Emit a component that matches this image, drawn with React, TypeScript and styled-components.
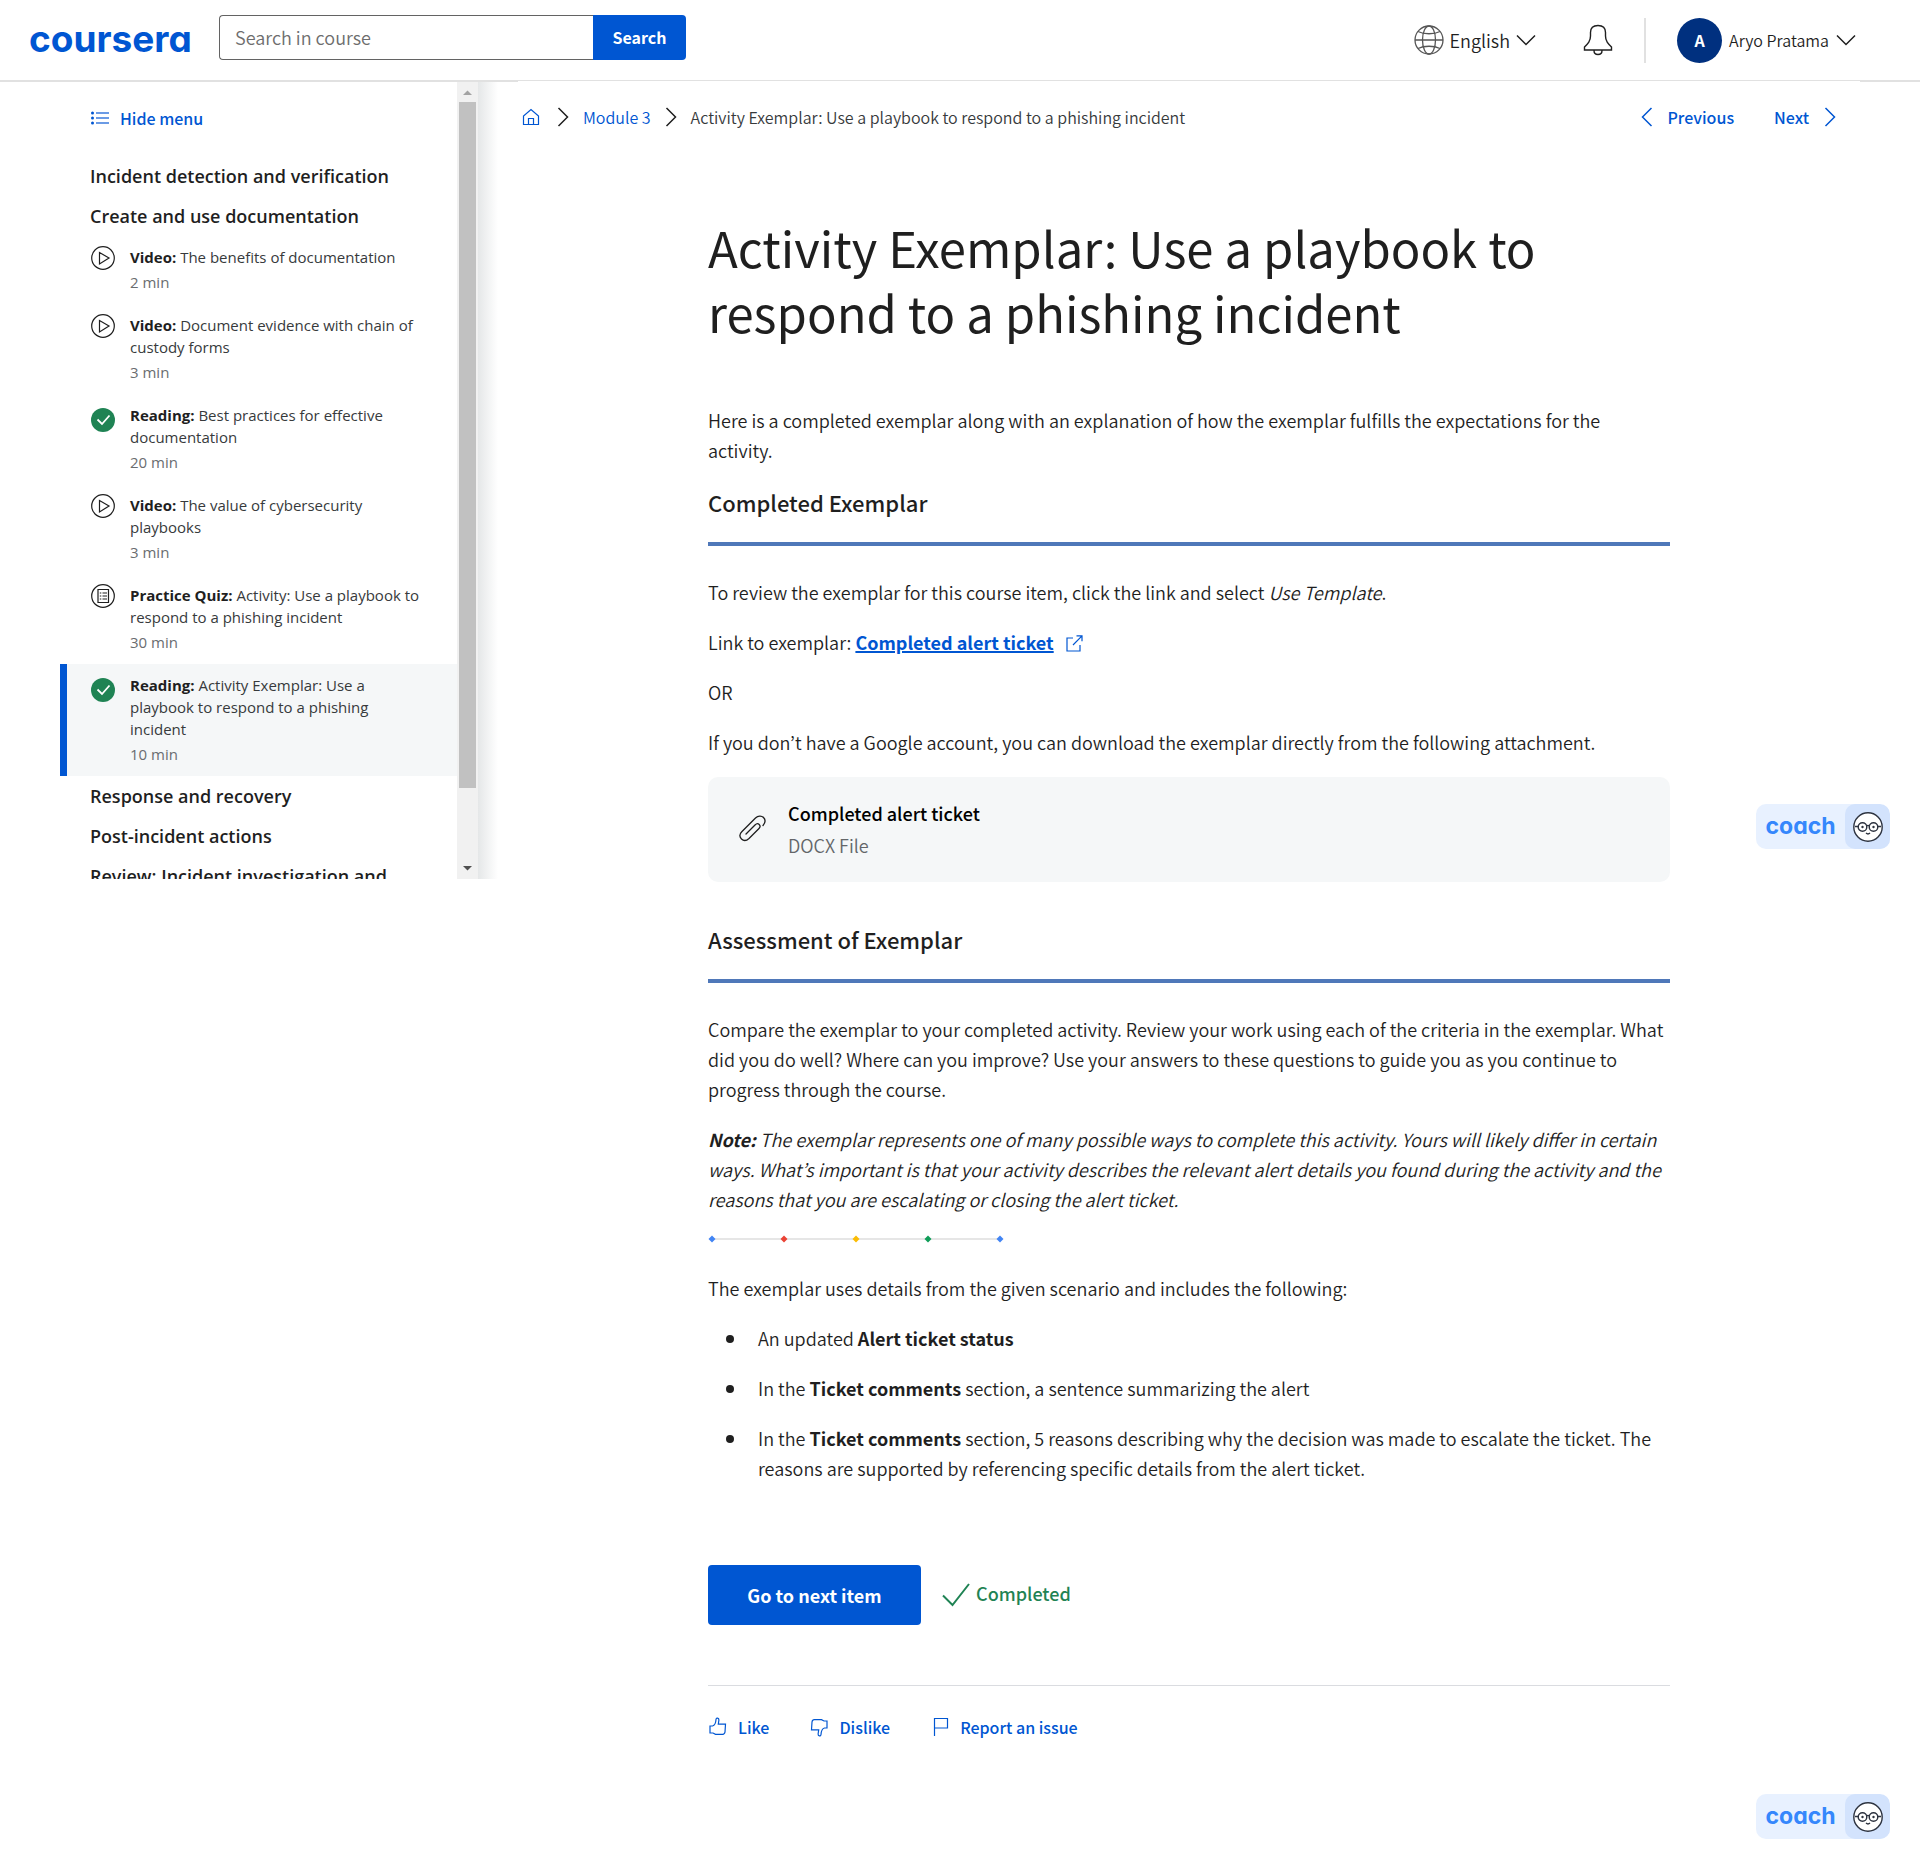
import React from 'react';
import styled, { createGlobalStyle, css } from 'styled-components';

const sans = `'Noto Sans CJK KR', 'Noto Sans', sans-serif`;
const menuSans = `'Open Sans', 'Noto Sans', sans-serif`;
const blue = '#0056d2';
const ink = '#1f1f1f';
const green = '#1f8354';

const GlobalStyle = createGlobalStyle`
  *, *::before, *::after { box-sizing: border-box; }
  body { margin: 0; background: #fff; color: ${ink}; font-family: ${sans}; font-size: 18px; font-weight: 350; line-height: 30px; }
  strong { font-weight: 700; }
  button, input { font-family: inherit; font-weight: inherit; }
  button { border: 0; background: none; padding: 0; cursor: pointer; color: inherit; }
  svg { display: block; flex: none; }
  a { color: ${blue}; text-decoration: none; }
`;

const Page = styled.div`
  position: relative;
  min-height: 100vh;
`;

/* Header */

const Header = styled.header`
  display: flex;
  align-items: center;
  justify-content: space-between;
  height: 82px;
  padding: 0 64px 0 29px;
  border-bottom: 2px solid #e1e1e1;
`;

const HeaderGroup = styled.div`
  display: flex;
  align-items: center;
`;

const Logo = styled.a`
  width: 190px;
  padding-bottom: 2px;
  font: 700 37px/44px Inter, sans-serif;
  font-feature-settings: 'cv11';
`;

const SearchForm = styled.form`
  display: flex;
  height: 45px;
  margin-bottom: 6px;
`;

const SearchInput = styled.input`
  width: 374px;
  padding: 0 15px;
  border: 1px solid #636363;
  border-right: 0;
  border-radius: 4px 0 0 4px;
  font-size: 18px;
  color: ${ink};
  &::placeholder { color: #6d6d6d; opacity: 1; }
`;

const SearchButton = styled.button`
  width: 93px;
  border-radius: 0 4px 4px 0;
  background: ${blue};
  color: #fff;
  font-size: 16px;
  font-weight: 700;
  line-height: 24px;
`;

const HeaderButton = styled.button<{ $small?: boolean }>`
  display: flex;
  align-items: center;
  gap: ${p => (p.$small ? 7 : 6)}px;
  font-size: ${p => (p.$small ? 16 : 18)}px;
  line-height: 30px;
`;

const Bell = styled(HeaderButton)`
  margin: 0 31px 0 47px;
`;

const Divider = styled.span`
  width: 2px;
  height: 45px;
  margin-right: 31px;
  background: #e1e1e1;
`;

const Avatar = styled.span`
  display: grid;
  place-items: center;
  width: 45px;
  height: 45px;
  border-radius: 50%;
  background: #00307f;
  color: #fff;
  font-size: 16px;
  font-weight: 700;
`;

/* Layout */

const Body = styled.div`
  display: grid;
  grid-template-columns: 518px minmax(0, 1fr);
`;

/* Course menu */

const Aside = styled.aside`
  display: flex;
  align-self: start;
  height: 797px;
  overflow: hidden;
  font-family: ${menuSans};
  font-weight: 400;
`;

const MenuScroll = styled.nav`
  width: 457px;
  padding-left: 60px;
  overflow: hidden;
`;

const HideMenu = styled.button`
  display: flex;
  align-items: center;
  gap: 11px;
  margin: 28px 0 30px 31px;
  color: ${blue};
  font: 500 16px/16px ${sans};
`;

const MenuHeading = styled.h2`
  margin: 0;
  padding: 8px 30px;
  font-size: 18px;
  font-weight: 600;
  line-height: 24px;
`;

const ItemList = styled.ul`
  margin: 0;
  padding: 0;
  list-style: none;
`;

const ItemLink = styled.a<{ $active?: boolean }>`
  display: flex;
  gap: 15px;
  padding: 10px 31px 11px 24px;
  border-left: 7px solid transparent;
  color: #373a3c;
  font-size: 15px;
  line-height: 22px;
  ${p => p.$active && css`
    border-left-color: ${blue};
    background: #f5f7f8;
  `}
`;

const ItemIcon = styled.span<{ $done?: boolean }>`
  padding-top: ${p => (p.$done ? 4 : 0)}px;
`;

const ItemKind = styled.strong`
  color: ${ink};
`;

const Minutes = styled.div`
  padding-top: 3px;
  color: #6a6d70;
`;

const Scrollbar = styled.div`
  display: flex;
  flex-direction: column;
  align-items: center;
  width: 21px;
  background: #f1f1f1;
`;

const ScrollThumb = styled.div`
  width: 17px;
  height: 686px;
  margin-bottom: auto;
  background: #c1c1c1;
`;

const ScrollShade = styled.div`
  width: 20px;
  background: linear-gradient(to right, #e5e7e8, #fff);
`;

/* Main column */

const Main = styled.main`
  margin: -1px 60px 0 0;
  background: #fff;
`;

const TopBar = styled.div`
  display: flex;
  justify-content: space-between;
  padding: 22px 24px 0 4px;
  font-size: 16px;
  line-height: 28px;
`;

const Crumbs = styled.nav`
  display: flex;
  align-items: center;
  gap: 14px;
  color: #373a3c;
`;

const HomeLink = styled.a`
  padding-right: 3px;
`;

const Pager = styled.nav`
  display: flex;
  gap: 40px;
`;

const PagerLink = styled.a`
  display: flex;
  align-items: center;
  gap: 15px;
  font-weight: 500;
`;

const Article = styled.article`
  margin: 0 190px;
`;

const Title = styled.h1`
  margin: 83px 0 61px;
  font-size: 49px;
  font-weight: 400;
  line-height: 65px;
`;

const SectionTitle = styled.h2`
  margin: 0;
  padding: 2px 0 25px;
  font-size: 22px;
  font-weight: 500;
  line-height: 30px;
`;

const Rule = styled.hr`
  height: 4px;
  margin: 0 0 31px;
  border: 0;
  background: #4f78b9;
`;

const Text = styled.p`
  margin: 0 0 20px;
  padding-right: 4px;
`;

const StrongLink = styled.a`
  font-weight: 700;
  text-decoration: underline;
  text-decoration-thickness: 2px;
`;

const OutIcon = styled.span`
  display: inline-block;
  margin-left: 12px;
  vertical-align: -2px;
`;

const FileCard = styled.a`
  display: flex;
  align-items: center;
  gap: 22px;
  height: 105px;
  margin-bottom: 40px;
  padding: 0 31px 2px;
  border-radius: 10px;
  background: #f5f7f8;
`;

const FileName = styled.div`
  color: #000;
  font-weight: 500;
  line-height: 32px;
`;

const FileType = styled.div`
  color: #636669;
  line-height: 32px;
`;

const Separator = styled.div`
  padding: 1px 0 30px;
`;

const Bullets = styled.ul`
  margin: 0;
  padding: 0 0 0 40px;
`;

const Bullet = styled.li`
  margin-bottom: 20px;
  padding-left: 10px;
  &::marker { font-size: 20px; }
`;

const Actions = styled.div`
  display: flex;
  align-items: center;
  gap: 20px;
  padding: 62px 0 60px;
  border-bottom: 1px solid #dadce0;
`;

const NextButton = styled.button`
  width: 213px;
  height: 60px;
  border-radius: 4px;
  background: ${blue};
  color: #fff;
  font-size: 18px;
  font-weight: 700;
`;

const Completed = styled.span`
  display: flex;
  align-items: center;
  gap: 6px;
  color: ${green};
  font-weight: 500;
`;

const CompletedText = styled.span`
  padding-bottom: 4px;
`;

const Feedback = styled.div`
  display: flex;
  gap: 40px;
  padding: 26px 0 100px;
`;

const FeedbackButton = styled.button`
  display: flex;
  align-items: center;
  gap: 10px;
  color: ${blue};
  font-size: 16px;
  font-weight: 500;
  line-height: 30px;
`;

/* Coach widget, floating over the page */

const CoachBadge = styled.button<{ $low?: boolean }>`
  position: absolute;
  right: 30px;
  ${p => (p.$low ? 'bottom: 31px;' : 'top: 804px;')}
  display: flex;
  width: 134px;
  height: 45px;
  border-radius: 10px;
  background: #e8f1ff;
  overflow: hidden;
`;

const CoachName = styled.span`
  flex: 1;
  color: #3587fc;
  font: 700 23px/45px Inter, sans-serif;
  font-feature-settings: 'cv11';
`;

const CoachFace = styled.span`
  display: grid;
  place-items: center;
  width: 45px;
  height: 45px;
  border-radius: 10px 10px 0 10px;
  background: #d3e3fd;
`;

/* Icons */

const line = (color: string, width = 1) => ({
  fill: 'none',
  stroke: color,
  strokeWidth: width,
});

const Chevron = ({ dir, color = ink }: { dir: 'down' | 'left' | 'right'; color?: string }) => {
  if (dir === 'down') {
    return (
      <svg width="20" height="12" viewBox="0 0 20 12" aria-hidden="true" {...line(color, 1.5)}>
        <path d="M1 1.5 10 10.5 19 1.5" />
      </svg>
    );
  }
  return (
    <svg width="12" height="20" viewBox="0 0 12 20" aria-hidden="true" {...line(color, 1.5)}>
      <path d={dir === 'left' ? 'M10.5 1 1.5 10l9 9' : 'M1.5 1l9 9-9 9'} />
    </svg>
  );
};

const Globe = () => (
  <svg width="30" height="30" viewBox="0 0 30 30" aria-hidden="true" {...line('#555', 1.3)}>
    <circle cx="15" cy="15" r="14" />
    <ellipse cx="15" cy="15" rx="6.5" ry="14" />
    <path d="M1 15h28M4 6.5c6 3 16 3 22 0M4 23.5c6-3 16-3 22 0" />
  </svg>
);

const BellIcon = () => (
  <svg width="30" height="32" viewBox="0 0 30 32" aria-hidden="true" {...line(ink, 1.4)}>
    <path d="M1.5 26v-3C5 19.5 7.5 17 7.5 12V8.5C7.5 4 10.5 1.5 15 1.5S22.5 4 22.5 8.5V12c0 5 2.5 7.5 6 11v3zM11 26.5c0 2.5 1.7 4 4 4s4-1.5 4-4" />
  </svg>
);

const ListIcon = () => (
  <svg width="18" height="14" viewBox="0 0 18 14" aria-hidden="true" fill={blue}>
    <circle cx="1.5" cy="2" r="1.5" />
    <circle cx="1.5" cy="7" r="1.5" />
    <circle cx="1.5" cy="12" r="1.5" />
    <path d="M5 2h13M5 7h13M5 12h13" stroke="#3b7bdd" strokeWidth="1.5" />
  </svg>
);

const PlayIcon = () => (
  <svg width="24" height="24" viewBox="0 0 24 24" aria-hidden="true" {...line(ink, 1.2)}>
    <circle cx="12" cy="12" r="11.3" />
    <path d="M8.5 6.5v11.5L18 12z" />
  </svg>
);

const QuizIcon = () => (
  <svg width="24" height="24" viewBox="0 0 24 24" aria-hidden="true" {...line(ink, 1.2)}>
    <circle cx="12" cy="12" r="11.3" />
    <path d="M7 5.5h10.5v13H7z" />
    <path d="M8.8 9h1.5M8.8 12h1.5M8.8 15h1.5M11.5 9h4.500M11.5 12h4.500M11.5 15h4.500" />
  </svg>
);

const DoneIcon = () => (
  <svg width="24" height="24" viewBox="0 0 24 24" aria-hidden="true">
    <circle cx="12" cy="12" r="12" fill={green} />
    <path d="M6.5 11.5l4.5 4.5 7.5-8.5" {...line('#fff', 1.8)} />
  </svg>
);

const HomeIcon = () => (
  <svg width="18" height="18" viewBox="0 0 18 18" aria-hidden="true" {...line(blue, 1.2)}>
    <path d="M1.5 16.5V8L9 1.5 16.5 8v8.5zM6.5 16.5V10.5h5v6" />
  </svg>
);

const LaunchIcon = () => (
  <svg width="17" height="17" viewBox="0 0 17 17" aria-hidden="true" {...line(blue, 1.2)}>
    <path d="M7 3H1v13h13V10M10.5 .8H16v5.5M16 .8 7 10" />
  </svg>
);

const ClipIcon = () => (
  <svg width="27" height="27" viewBox="0 0 27 27" aria-hidden="true" {...line(ink, 1.3)} strokeLinecap="round">
    <path d="M24 10.5C26.5 7.5 26.5 4.5 24.5 2.5S19 .7 16.5 3L3 16.5C.5 19 .5 22 2.5 24S7.5 25.8 10 23.5L20 13.5C21.5 12 21.2 10.5 20.2 9.5S17.5 8.5 16 10L7 19" />
  </svg>
);

const CheckIcon = () => (
  <svg width="29" height="24" viewBox="-1 0 29 24" aria-hidden="true" {...line(green, 2)}>
    <path d="M1 12.500l9.500 9.500L27 1" />
  </svg>
);

const thumbPath =
  'M2 9h2.5C6.5 8.5 7.8 5.5 8 2.5 8.3.3 11 .8 10.9 3L10.3 7.2H17.5L17 15c-.2 1.3-1 2.3-2.3 2.3H7.5L5 16H2z';

const LikeIcon = () => (
  <svg width="20" height="20" viewBox="0 0 20 20" aria-hidden="true" {...line(blue, 1.2)}>
    <path d={thumbPath} />
  </svg>
);

const DislikeIcon = () => (
  <svg width="20" height="20" viewBox="0 0 20 20" aria-hidden="true" {...line(blue, 1.2)}>
    <g transform="rotate(180 10 10)">
      <path d={thumbPath} />
    </g>
  </svg>
);

const FlagIcon = () => (
  <svg width="20" height="20" viewBox="-2 0 20 20" aria-hidden="true" {...line(blue, 1.2)}>
    <path d="M2.5 19V1.5h13v9.5h-13" />
  </svg>
);

const Timeline = () => (
  <svg width="298" height="8" viewBox="0 0 298 8" aria-hidden="true">
    <path d="M4 4h290" stroke="#dedede" strokeWidth="1.5" />
    {['#4285f4', '#ea4335', '#fbbc04', '#0f9d58', '#4285f4'].map((c, i) => (
      <path key={i} d={`M${4 + i * 72} .5l3.5 3.5-3.5 3.5-3.5-3.5z`} fill={c} />
    ))}
  </svg>
);

const FaceIcon = () => (
  <svg width="30" height="30" viewBox="0 0 30 30" aria-hidden="true" {...line('#2d3340', 1.4)}>
    <circle cx="15" cy="15" r="14.2" fill="#fff" />
    <circle cx="9.5" cy="15" r="4.3" />
    <circle cx="20.5" cy="15" r="4.3" />
    <path d="M13.5 14c1-.8 2-.8 3 0M2 14.5h3.2M24.8 14.5H28M13 21c1.3 1.2 2.7 1.2 4 0" />
    <circle cx="9.5" cy="15" r="1.2" fill="#2d3340" stroke="none" />
    <circle cx="20.5" cy="15" r="1.2" fill="#2d3340" stroke="none" />
  </svg>
);

const Arrow = ({ up }: { up?: boolean }) => (
  <svg width="21" height="20" viewBox="0 0 21 20" aria-hidden="true">
    <path d={up ? 'M6 13h9L10.5 8.5z' : 'M6 7h9L10.5 11.5z'} fill={up ? '#a3a3a3' : '#505050'} />
  </svg>
);

/* Content */

type Item = { kind: string; name: string; minutes: number; done?: boolean; active?: boolean };

const items: Item[] = [
  { kind: 'Video', name: 'The benefits of documentation', minutes: 2 },
  { kind: 'Video', name: 'Document evidence with chain of custody forms', minutes: 3 },
  { kind: 'Reading', name: 'Best practices for effective documentation', minutes: 20, done: true },
  { kind: 'Video', name: 'The value of cybersecurity playbooks', minutes: 3 },
  { kind: 'Practice Quiz', name: 'Activity: Use a playbook to respond to a phishing incident', minutes: 30 },
  { kind: 'Reading', name: 'Activity Exemplar: Use a playbook to respond to a phishing incident', minutes: 10, done: true, active: true },
];

const MenuItem = ({ item }: { item: Item }) => (
  <li>
    <ItemLink href="#" $active={item.active}>
      <ItemIcon $done={item.done}>
        {item.done ? <DoneIcon /> : item.kind === 'Video' ? <PlayIcon /> : <QuizIcon />}
      </ItemIcon>
      <div>
        <ItemKind>{item.kind}:</ItemKind> {item.name}
        <Minutes>{item.minutes} min</Minutes>
      </div>
    </ItemLink>
  </li>
);

const Coach = ({ low }: { low?: boolean }) => (
  <CoachBadge $low={low}>
    <CoachName>coach</CoachName>
    <CoachFace>
      <FaceIcon />
    </CoachFace>
  </CoachBadge>
);

export default function App() {
  return (
    <Page>
      <GlobalStyle />
      <Header>
        <HeaderGroup>
          <Logo href="#">coursera</Logo>
          <SearchForm role="search">
            <SearchInput type="text" placeholder="Search in course" aria-label="Search in course" />
            <SearchButton type="button">Search</SearchButton>
          </SearchForm>
        </HeaderGroup>
        <HeaderGroup>
          <HeaderButton>
            <Globe />
            English
            <Chevron dir="down" />
          </HeaderButton>
          <Bell aria-label="Notifications">
            <BellIcon />
          </Bell>
          <Divider />
          <HeaderButton $small>
            <Avatar>A</Avatar>
            Aryo Pratama
            <Chevron dir="down" />
          </HeaderButton>
        </HeaderGroup>
      </Header>

      <Body>
        <Aside>
          <MenuScroll aria-label="Course menu">
            <HideMenu>
              <ListIcon />
              Hide menu
            </HideMenu>
            <MenuHeading>Incident detection and verification</MenuHeading>
            <MenuHeading>Create and use documentation</MenuHeading>
            <ItemList>
              {items.map(item => (
                <MenuItem key={item.name} item={item} />
              ))}
            </ItemList>
            <MenuHeading>Response and recovery</MenuHeading>
            <MenuHeading>Post-incident actions</MenuHeading>
            <MenuHeading>Review: Incident investigation and response</MenuHeading>
          </MenuScroll>
          <Scrollbar>
            <Arrow up />
            <ScrollThumb />
            <Arrow />
          </Scrollbar>
          <ScrollShade />
        </Aside>

        <Main>
          <TopBar>
            <Crumbs aria-label="Breadcrumb">
              <HomeLink href="#" aria-label="Home">
                <HomeIcon />
              </HomeLink>
              <Chevron dir="right" />
              <a href="#">Module 3</a>
              <Chevron dir="right" />
              <span>Activity Exemplar: Use a playbook to respond to a phishing incident</span>
            </Crumbs>
            <Pager aria-label="Items">
              <PagerLink href="#">
                <Chevron dir="left" color={blue} />
                Previous
              </PagerLink>
              <PagerLink href="#">
                Next
                <Chevron dir="right" color={blue} />
              </PagerLink>
            </Pager>
          </TopBar>

          <Article>
            <Title>Activity Exemplar: Use a playbook to respond to a phishing incident</Title>
            <Text>
              Here is a completed exemplar along with an explanation of how the exemplar fulfills the
              expectations for the activity.
            </Text>
            <SectionTitle>Completed Exemplar</SectionTitle>
            <Rule />
            <Text>
              To review the exemplar for this course item, click the link and select <em>Use Template</em>.
            </Text>
            <Text>
              Link to exemplar: <StrongLink href="#">Completed alert ticket</StrongLink>
              <OutIcon>
                <LaunchIcon />
              </OutIcon>
            </Text>
            <Text>OR</Text>
            <Text>
              If you don’t have a Google account, you can download the exemplar directly from the
              following attachment.
            </Text>
            <FileCard href="#">
              <ClipIcon />
              <div>
                <FileName>Completed alert ticket</FileName>
                <FileType>DOCX File</FileType>
              </div>
            </FileCard>
            <SectionTitle>Assessment of Exemplar</SectionTitle>
            <Rule />
            <Text>
              Compare the exemplar to your completed activity. Review your work using each of the
              criteria in the exemplar. What did you do well? Where can you improve? Use your answers
              to these questions to guide you as you continue to progress through the course.
            </Text>
            <Text>
              <em>
                <strong>Note:</strong> The exemplar represents one of many possible ways to complete
                this activity. Yours will likely differ in certain ways. What’s important is that your
                activity describes the relevant alert details you found during the activity and the
                reasons that you are escalating or closing the alert ticket.
              </em>
            </Text>
            <Separator>
              <Timeline />
            </Separator>
            <Text>The exemplar uses details from the given scenario and includes the following:</Text>
            <Bullets>
              <Bullet>
                An updated <strong>Alert ticket status</strong>
              </Bullet>
              <Bullet>
                In the <strong>Ticket comments</strong> section, a sentence summarizing the alert
              </Bullet>
              <Bullet>
                In the <strong>Ticket comments</strong> section, 5 reasons describing why the decision
                was made to escalate the ticket. The reasons are supported by referencing specific
                details from the alert ticket.
              </Bullet>
            </Bullets>
            <Actions>
              <NextButton>Go to next item</NextButton>
              <Completed>
                <CheckIcon />
                <CompletedText>Completed</CompletedText>
              </Completed>
            </Actions>
            <Feedback>
              <FeedbackButton>
                <LikeIcon />
                Like
              </FeedbackButton>
              <FeedbackButton>
                <DislikeIcon />
                Dislike
              </FeedbackButton>
              <FeedbackButton>
                <FlagIcon />
                Report an issue
              </FeedbackButton>
            </Feedback>
          </Article>
        </Main>
      </Body>
      <Coach />
      <Coach low />
    </Page>
  );
}
